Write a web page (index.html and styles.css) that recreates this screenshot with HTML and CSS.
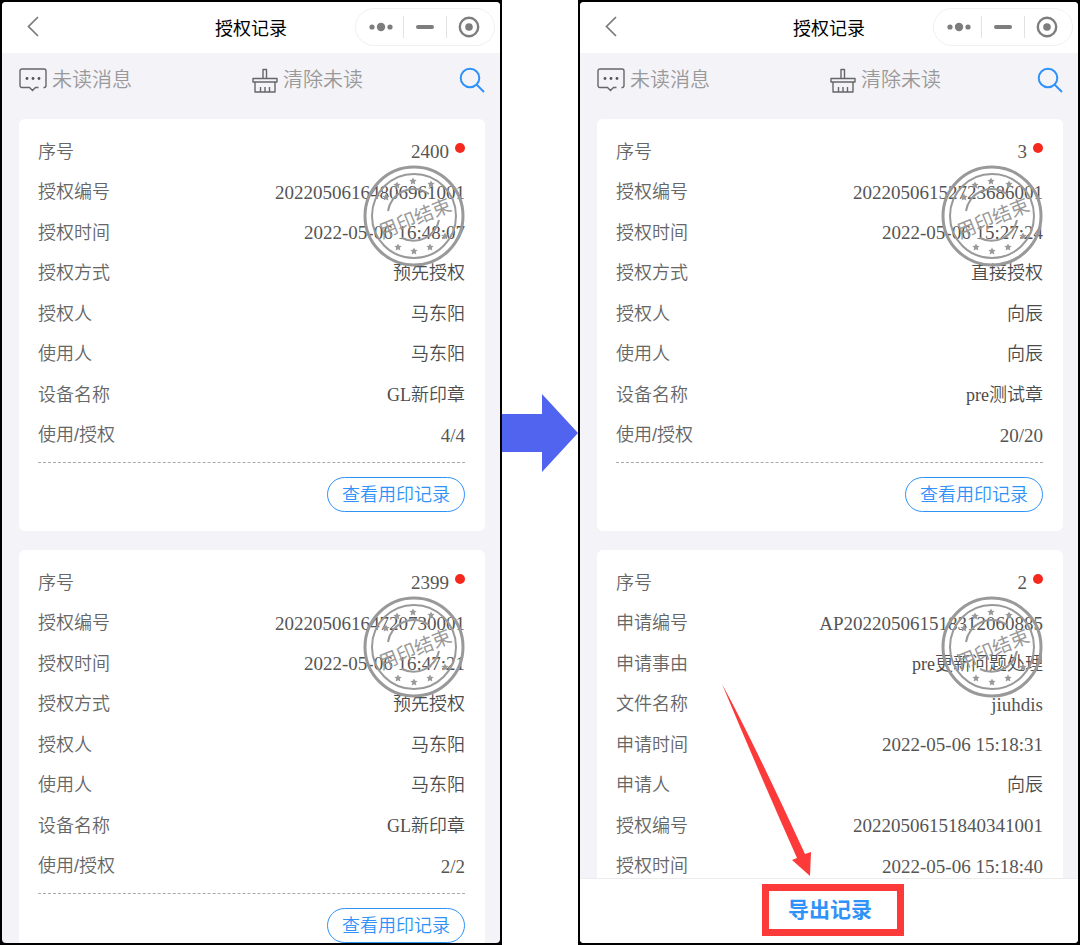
FILE: index.html
```html
<!DOCTYPE html>
<html lang="zh-CN">
<head>
    <meta charset="UTF-8">
    <meta name="viewport" content="width=device-width, initial-scale=1.0">
    <title>授权记录</title>
    <link rel="stylesheet" href="styles.css">
</head>
<body>
    <!-- Shared shapes -->
    <svg class="defs" width="0" height="0" aria-hidden="true">
        <symbol id="star" viewBox="0 0 10 10">
            <path d="M5 .5 6.4 3.4 9.6 3.8 7.2 6 7.9 9.3 5 7.7 2.1 9.3 2.8 6 .4 3.8 3.6 3.4Z"/>
        </symbol>
        <symbol id="seal" viewBox="0 0 102 102">
            <g fill="none" stroke="#999">
                <circle cx="51" cy="51" r="49" stroke-width="3"/>
                <circle cx="51" cy="51" r="42" stroke-width="2"/>
                <path d="M25 46A26 26 0 0 1 66 29M39 73A26 26 0 0 0 76 55" stroke-width="2"/>
            </g>
            <g fill="#999">
                <use href="#star" x="19" y="28" width="8" height="8"/>
                <use href="#star" x="30" y="16" width="8" height="8"/>
                <use href="#star" x="46" y="12" width="8" height="8"/>
                <use href="#star" x="64" y="15" width="8" height="8"/>
                <use href="#star" x="31" y="78" width="8" height="8"/>
                <use href="#star" x="47" y="82" width="8" height="8"/>
                <use href="#star" x="63" y="78" width="8" height="8"/>
                <use href="#star" x="78" y="67" width="8" height="8"/>
            </g>
        </symbol>
        <symbol id="back" viewBox="0 0 14 22">
            <path d="M12 1 2.500 10.500 12 20" fill="none" stroke="#7a7a7a" stroke-width="1.7"/>
        </symbol>
        <symbol id="dots" viewBox="0 0 24 10">
            <g fill="#7d7d7d"><circle cx="3" cy="5" r="2.6"/><circle cx="12" cy="5" r="4.2"/><circle cx="21" cy="5" r="2.6"/></g>
        </symbol>
        <symbol id="minus" viewBox="0 0 18 4">
            <rect width="18" height="4" rx="2" fill="#7d7d7d"/>
        </symbol>
        <symbol id="target" viewBox="0 0 22 22">
            <circle cx="11" cy="11" r="9.2" fill="none" stroke="#7d7d7d" stroke-width="2.4"/>
            <circle cx="11" cy="11" r="3.8" fill="#7d7d7d"/>
        </symbol>
        <symbol id="message" viewBox="0 0 28 24">
            <path d="M19.500 19.500 16.500 19.500 13.500 22.500 10.500 19.500H3A2 2 0 0 1 1 17.500V3A2 2 0 0 1 3 1H25A2 2 0 0 1 27 3V17.500A2 2 0 0 1 24.500 19.500" fill="none" stroke="#666" stroke-width="1.4"/>
            <g fill="#555"><circle cx="8" cy="10.500" r="1.4"/><circle cx="14" cy="10.500" r="1.4"/><circle cx="20" cy="10.500" r="1.4"/></g>
        </symbol>
        <symbol id="brush" viewBox="0 0 26 25">
            <path d="M11 10.500V1.500H14.500V10.500M1 14V10.500H25V14ZM3 14V24H23V14M8.500 24V19M13 24V19M17.500 24V19" fill="none" stroke="#666" stroke-width="1.4" stroke-linejoin="round"/>
        </symbol>
        <symbol id="search" viewBox="0 0 26 26">
            <path d="M17.500 17.500 25 25" stroke="#2f92f8" stroke-width="2"/>
            <circle cx="11" cy="11" r="9.300" fill="none" stroke="#2f92f8" stroke-width="2"/>
        </symbol>
    </svg>

    <main class="stage">
        <!-- Record list -->
        <section class="phone">
            <div class="screen">
                <header class="navbar">
                    <button class="icon-btn back" aria-label="返回"><svg width="14" height="22"><use href="#back"/></svg></button>
                    <h1>授权记录</h1>
                    <div class="capsule">
                        <button class="icon-btn" aria-label="更多"><svg width="24" height="10"><use href="#dots"/></svg></button>
                        <button class="icon-btn" aria-label="最小化"><svg width="18" height="4"><use href="#minus"/></svg></button>
                        <button class="icon-btn" aria-label="关闭"><svg width="22" height="22"><use href="#target"/></svg></button>
                    </div>
                </header>
                <div class="toolbar">
                    <button class="tool"><svg width="28" height="24"><use href="#message"/></svg>未读消息</button>
                    <div class="tool-end">
                        <button class="tool"><svg width="26" height="25"><use href="#brush"/></svg>清除未读</button>
                        <button class="icon-btn search" aria-label="搜索"><svg width="26" height="26"><use href="#search"/></svg></button>
                    </div>
                </div>
                <div class="list">
                    <article class="card">
                        <dl>
                            <div class="row"><dt>序号</dt><dd class="num unread">2400</dd></div>
                            <div class="row"><dt>授权编号</dt><dd class="num">20220506164806961001</dd></div>
                            <div class="row"><dt>授权时间</dt><dd class="num">2022-05-06 16:48:07</dd></div>
                            <div class="row"><dt>授权方式</dt><dd>预先授权</dd></div>
                            <div class="row"><dt>授权人</dt><dd>马东阳</dd></div>
                            <div class="row"><dt>使用人</dt><dd>马东阳</dd></div>
                            <div class="row"><dt>设备名称</dt><dd>GL新印章</dd></div>
                            <div class="row"><dt>使用/授权</dt><dd class="num">4/4</dd></div>
                        </dl>
                        <div class="card-foot"><button class="view-btn">查看用印记录</button></div>
                        <svg class="seal" viewBox="0 0 102 102"><use href="#seal"/><text x="52" y="60" transform="rotate(-22 52 53)">用印结束</text></svg>
                    </article>
                    <article class="card">
                        <dl>
                            <div class="row"><dt>序号</dt><dd class="num unread">2399</dd></div>
                            <div class="row"><dt>授权编号</dt><dd class="num">20220506164720730001</dd></div>
                            <div class="row"><dt>授权时间</dt><dd class="num">2022-05-06 16:47:21</dd></div>
                            <div class="row"><dt>授权方式</dt><dd>预先授权</dd></div>
                            <div class="row"><dt>授权人</dt><dd>马东阳</dd></div>
                            <div class="row"><dt>使用人</dt><dd>马东阳</dd></div>
                            <div class="row"><dt>设备名称</dt><dd>GL新印章</dd></div>
                            <div class="row"><dt>使用/授权</dt><dd class="num">2/2</dd></div>
                        </dl>
                        <div class="card-foot"><button class="view-btn">查看用印记录</button></div>
                        <svg class="seal" viewBox="0 0 102 102"><use href="#seal"/><text x="52" y="60" transform="rotate(-22 52 53)">用印结束</text></svg>
                    </article>
                </div>
            </div>
        </section>

        <div class="step">
            <svg width="76" height="78" viewBox="0 0 76 78" aria-hidden="true"><path d="M0 20H40V0L76 39 40 78V58H0Z" fill="#5064f0"/></svg>
        </div>

        <!-- Search result with export -->
        <section class="phone">
            <div class="screen">
                <header class="navbar">
                    <button class="icon-btn back" aria-label="返回"><svg width="14" height="22"><use href="#back"/></svg></button>
                    <h1>授权记录</h1>
                    <div class="capsule">
                        <button class="icon-btn" aria-label="更多"><svg width="24" height="10"><use href="#dots"/></svg></button>
                        <button class="icon-btn" aria-label="最小化"><svg width="18" height="4"><use href="#minus"/></svg></button>
                        <button class="icon-btn" aria-label="关闭"><svg width="22" height="22"><use href="#target"/></svg></button>
                    </div>
                </header>
                <div class="toolbar">
                    <button class="tool"><svg width="28" height="24"><use href="#message"/></svg>未读消息</button>
                    <div class="tool-end">
                        <button class="tool"><svg width="26" height="25"><use href="#brush"/></svg>清除未读</button>
                        <button class="icon-btn search" aria-label="搜索"><svg width="26" height="26"><use href="#search"/></svg></button>
                    </div>
                </div>
                <div class="list">
                    <article class="card">
                        <dl>
                            <div class="row"><dt>序号</dt><dd class="num unread">3</dd></div>
                            <div class="row"><dt>授权编号</dt><dd class="num">20220506152723686001</dd></div>
                            <div class="row"><dt>授权时间</dt><dd class="num">2022-05-06 15:27:24</dd></div>
                            <div class="row"><dt>授权方式</dt><dd>直接授权</dd></div>
                            <div class="row"><dt>授权人</dt><dd>向辰</dd></div>
                            <div class="row"><dt>使用人</dt><dd>向辰</dd></div>
                            <div class="row"><dt>设备名称</dt><dd>pre测试章</dd></div>
                            <div class="row"><dt>使用/授权</dt><dd class="num">20/20</dd></div>
                        </dl>
                        <div class="card-foot"><button class="view-btn">查看用印记录</button></div>
                        <svg class="seal" viewBox="0 0 102 102"><use href="#seal"/><text x="52" y="60" transform="rotate(-22 52 53)">用印结束</text></svg>
                    </article>
                    <article class="card">
                        <dl>
                            <div class="row"><dt>序号</dt><dd class="num unread">2</dd></div>
                            <div class="row"><dt>申请编号</dt><dd class="num">AP202205061518312060885</dd></div>
                            <div class="row"><dt>申请事由</dt><dd>pre更新问题处理</dd></div>
                            <div class="row"><dt>文件名称</dt><dd class="num">jiuhdis</dd></div>
                            <div class="row"><dt>申请时间</dt><dd class="num">2022-05-06 15:18:31</dd></div>
                            <div class="row"><dt>申请人</dt><dd>向辰</dd></div>
                            <div class="row"><dt>授权编号</dt><dd class="num">20220506151840341001</dd></div>
                            <div class="row"><dt>授权时间</dt><dd class="num">2022-05-06 15:18:40</dd></div>
                        </dl>
                        <svg class="seal" viewBox="0 0 102 102"><use href="#seal"/><text x="52" y="60" transform="rotate(-22 52 53)">用印结束</text></svg>
                    </article>
                </div>
                <footer class="export-bar">
                    <button class="export-btn">导出记录</button>
                    <svg class="pointer" width="90" height="192" viewBox="0 0 90 192" aria-hidden="true"><path d="M0 0Q30 55 83 170L89 168 88 192 70 176 75 174Q35 84 0 0Z" fill="#fd3a3a"/></svg>
                </footer>
            </div>
        </section>
    </main>
</body>
</html>
```
FILE: styles.css
```css
* {
    margin: 0;
    padding: 0;
    box-sizing: border-box;
}
body {
    font-family: "Liberation Sans", "Noto Sans CJK SC", sans-serif;
    font-weight: 350;
    font-size: 18px;
    background: #fff;
    color: #555;
}
button {
    font: inherit;
    color: inherit;
    background: none;
    border: none;
    cursor: pointer;
}
svg {
    display: block;
    flex: none;
}
.defs {
    position: absolute;
}
.stage {
    display: flex;
    height: 100vh;
}
/* Phone frames */
.phone {
    flex: 1;
    min-width: 0;
    padding: 2px;
    background: #000;
}
.screen {
    display: flex;
    flex-direction: column;
    height: 100%;
    background: #f4f3f8;
    border-radius: 4px;
    overflow: hidden;
}
.step {
    padding-top: 394px;
}
/* Title bar */
.navbar {
    display: grid;
    grid-template-columns: 1fr auto 1fr;
    align-items: center;
    flex: none;
    height: 51px;
    padding: 0 5px 1px;
    background: #fff;
}
.navbar h1 {
    font-size: 18px;
    font-weight: 400;
    color: #000;
}
.icon-btn {
    display: flex;
    align-items: center;
    justify-content: center;
}
.back {
    justify-self: start;
    padding: 0 19px;
}
.capsule {
    display: flex;
    align-items: center;
    justify-self: end;
    width: 140px;
    height: 38px;
    border: 1px solid #f0f0f0;
    border-radius: 19px;
    padding: 0 4px;
}
.capsule .icon-btn {
    flex: 1;
    height: 22px;
}
.capsule .icon-btn + .icon-btn {
    border-left: 1px solid #e2e2e2;
}
/* Toolbar */
.toolbar {
    display: grid;
    grid-template-columns: 1fr 1fr;
    align-items: center;
    flex: none;
    height: 66px;
    padding: 0 15px 12px 17px;
}
.tool {
    display: flex;
    align-items: center;
    gap: 5px;
    font-size: 20px;
    line-height: 28px;
    color: #999;
}
.tool-end {
    display: flex;
    align-items: center;
    justify-content: space-between;
}
/* Record cards */
.list {
    flex: 1;
    min-height: 0;
    padding: 0 15px 0 17px;
    overflow: hidden;
}
.card {
    position: relative;
    margin-bottom: 19px;
    padding: 13px 20px 19px 19px;
    background: #fff;
    border-radius: 6px;
}
.row {
    display: flex;
    justify-content: space-between;
    line-height: 40px;
}
.row:nth-child(even) {
    line-height: 41px;
}
.row dt {
    color: #666;
}
.row dd {
    font-family: "Liberation Serif", "Noto Sans CJK SC", serif;
    color: #4c4c4c;
}
.row .num {
    font-size: 19px;
    color: #555;
}
.unread {
    display: flex;
    align-items: center;
    gap: 6px;
}
.unread::after {
    content: "";
    width: 10px;
    height: 10px;
    margin-bottom: 8px;
    border-radius: 50%;
    background: #f5281e;
}
.card-foot {
    display: flex;
    justify-content: flex-end;
    margin-top: 6px;
    padding-top: 14px;
    border-top: 1px dashed #aaa;
}
.view-btn {
    height: 35px;
    padding: 0 14px;
    border: 1px solid #2f92f8;
    border-radius: 18px;
    line-height: 32px;
    color: #2f92f8;
}
.seal {
    position: absolute;
    top: 46px;
    right: 20px;
    width: 102px;
    height: 102px;
}
.seal text {
    font-size: 19px;
    font-weight: 400;
    text-anchor: middle;
    fill: #999;
}
/* Export bar */
.export-bar {
    position: relative;
    display: flex;
    align-items: center;
    justify-content: center;
    flex: none;
    height: 65px;
    padding-bottom: 2px;
    border-top: 1px solid #ececec;
    background: #fff;
}
.export-btn {
    height: 52px;
    margin-left: 8px;
    padding: 0 25px 0 19px;
    border: 7px solid #fd3a3a;
    font-size: 21px;
    font-weight: 700;
    line-height: 38px;
    color: #2f92f8;
}
.pointer {
    position: absolute;
    bottom: calc(100% + 3px);
    left: calc(50% - 107px);
}
```
